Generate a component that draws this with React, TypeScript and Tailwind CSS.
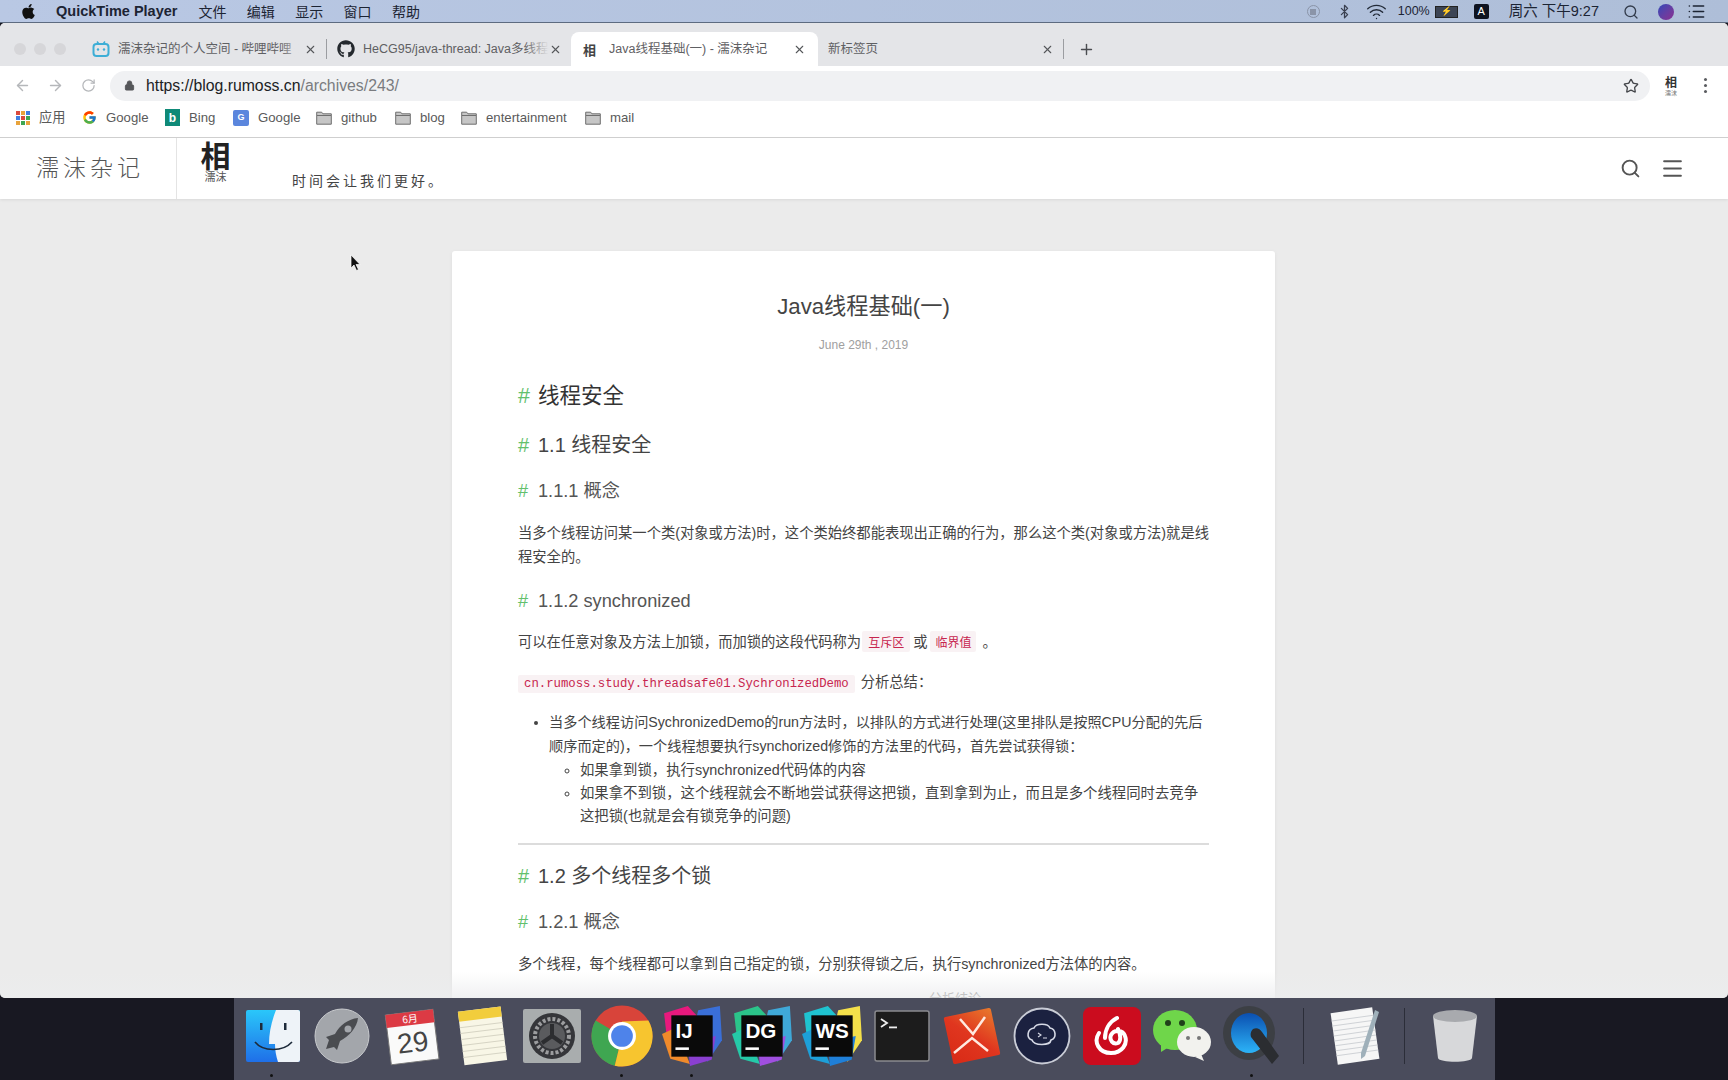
import React from "react";
import { ArrowLeft, ArrowRight, RotateCw, Lock, Star, Search, Menu, X, Plus, Wifi, Bluetooth, List } from "lucide-react";
import { FaApple, FaGithub } from "react-icons/fa";
import { FcGoogle } from "react-icons/fc";

const sans = "font-['Liberation_Sans','Noto_Sans_CJK_SC',sans-serif]";

function Hd({ size, lh, mt, color, children }: { size: string; lh: string; mt: string; color: string; children: React.ReactNode }) {
  return (
    <div className={`${size} ${lh} ${mt} ${color} flex`}>
      <span className="w-[20px] text-[#62c06c] font-normal">#</span>
      <span>{children}</span>
    </div>
  );
}

function Folder() {
  return (
    <svg width="16" height="14" viewBox="0 0 16 14" className="shrink-0">
      <path d="M0.7 1.2h5l1.2 1.6h8.4v10.4H0.7z" fill="#c6c6c6" stroke="#6f6f6f" strokeWidth="1" />
      <path d="M1 4.5h14" stroke="#6f6f6f" strokeWidth="1" />
    </svg>
  );
}

function Bookmark({ icon, label, w }: { icon: React.ReactNode; label: string; w: string }) {
  return (
    <div className={`flex items-center gap-[9px] ${w}`}>
      {icon}
      <span className="text-[13.200px] text-[#5a5a5a]">{label}</span>
    </div>
  );
}

function Tab({ icon, title, w, active, fade }: { icon: React.ReactNode; title: string; w: string; active?: boolean; fade?: boolean }) {
  return (
    <div className={`${w} h-[34px] flex items-center shrink-0 ${active ? "bg-white rounded-t-[8px] pl-[12px] pr-[12px]" : "pl-[10px] pr-[9px]"}`}>
      {icon}
      <span className="flex-1 overflow-hidden whitespace-nowrap text-[12.500px] text-[#5f6063] relative">
        {title}
        {fade && <span className="absolute right-0 top-0 bottom-0 w-[24px] bg-gradient-to-r from-transparent to-[#e4e5e8]" />}
      </span>
      <X size={13} strokeWidth={2} className="text-[#55575a] shrink-0" />
    </div>
  );
}

const jb = (a: string, b: string, c: string, d: string, label: string) => (
  <svg width="62" height="62" viewBox="0 0 60 60">
    <polygon points="3,8 26,1 38,14 20,36 5,26" fill={a} />
    <polygon points="36,5 57,1 59,34 45,55 30,30" fill={b} />
    <polygon points="1,28 14,22 28,57 9,52" fill={c} />
    <polygon points="26,36 53,30 49,53 28,59" fill={d} />
    <rect x="10" y="10" width="40" height="40" fill="#0a0a0a" />
    <text x="14" y="32" fontSize="20" fontWeight="700" fill="#fff" fontFamily="Liberation Sans, sans-serif">{label}</text>
    <rect x="14" y="41" width="13" height="2.500" fill="#fff" />
  </svg>
);

const dockItems: { k: string; dot?: boolean; el: React.ReactNode }[] = [
  { k: "finder", dot: true, el: (
    <svg width="60" height="60" viewBox="0 0 60 60">
      <defs><linearGradient id="fb" x1="0" y1="0" x2="0" y2="1"><stop offset="0" stopColor="#2ac7fa" /><stop offset="1" stopColor="#1f6fe8" /></linearGradient></defs>
      <rect x="4" y="4" width="54" height="52" rx="2" fill="url(#fb)" />
      <path d="M34 4h22a2 2 0 0 1 2 2v48a2 2 0 0 1-2 2H36c-2-6-3-12-3-18h-6c0-12 3-24 7-34z" fill="#eef3f8" />
      <rect x="18" y="17" width="2.500" height="7" fill="#1d2a3a" /><rect x="42" y="17" width="2.500" height="7" fill="#1d2a3a" />
      <path d="M13 36c8 10 28 10 37 0" stroke="#1d2a3a" strokeWidth="1.600" fill="none" />
    </svg>) },
  { k: "launchpad", el: (
    <svg width="60" height="60" viewBox="0 0 60 60">
      <circle cx="30" cy="30" r="27" fill="#a3a6ab" stroke="#c8cacd" strokeWidth="1" />
      <path d="M46 12c-10 1-18 7-23 16l-9 3 3 3-3 9 8-2 3 3 3-9c9-5 17-13 18-23z" fill="#4a4c50" />
      <circle cx="36" cy="23" r="3.500" fill="#a3a6ab" />
    </svg>) },
  { k: "cal", el: (
    <svg width="60" height="60" viewBox="0 0 60 60">
      <g transform="rotate(-7 30 30)">
        <rect x="6" y="6" width="48" height="50" fill="#fafafa" stroke="#777" strokeWidth="1" />
        <rect x="6" y="6" width="48" height="13" fill="#dc3a44" />
        <text x="30" y="16.500" textAnchor="middle" fontSize="10" fill="#fff" fontFamily="Noto Sans CJK SC, sans-serif">6月</text>
        <text x="30" y="46" textAnchor="middle" fontSize="28" fill="#444" fontFamily="Liberation Sans, sans-serif">29</text>
      </g>
    </svg>) },
  { k: "notes", el: (
    <svg width="60" height="60" viewBox="0 0 60 60">
      <g transform="rotate(-7 30 30)">
        <rect x="9" y="3" width="43" height="54" fill="#f8f6e6" />
        <rect x="9" y="3" width="43" height="10" fill="#f2cd3c" />
        {[19, 25, 31, 37, 43, 49].map((y) => <line key={y} x1="9" x2="52" y1={y} y2={y} stroke="#d6d4c4" strokeWidth="1" />)}
      </g>
    </svg>) },
  { k: "prefs", el: (
    <svg width="60" height="60" viewBox="0 0 60 60">
      <rect x="1" y="3" width="58" height="54" rx="2" fill="#a9adae" />
      <circle cx="30" cy="30" r="23" fill="#35363a" />
      <circle cx="30" cy="30" r="17" fill="none" stroke="#9c9d9f" strokeWidth="4" strokeDasharray="3 2" />
      <circle cx="30" cy="30" r="13" fill="#5a5b5e" />
      <path d="M30 30V18M30 30l10 7M30 30l-10 7" stroke="#2c2d30" strokeWidth="4" />
    </svg>) },
  { k: "chrome", dot: true, el: (
    <svg width="62" height="62" viewBox="0 0 60 60">
      <circle cx="30" cy="30" r="29.500" fill="#d8443a" />
      <path d="M4.500 15A29.500 29.500 0 0 0 23 58.700L30 30z" fill="#3fa651" />
      <path d="M55.500 15A29.500 29.500 0 0 1 23 58.700L30 30 30 16z" fill="#f7c52f" />
      <circle cx="30" cy="30" r="13.500" fill="#fff" />
      <circle cx="30" cy="30" r="10.500" fill="#4e83ea" />
    </svg>) },
  { k: "ij", dot: true, el: jb("#e8197d", "#3a6fd8", "#f08a2a", "#8a3fd0", "IJ") },
  { k: "dg", el: jb("#2bc48a", "#3fa8d8", "#25c9a8", "#a04fe0", "DG") },
  { k: "ws", el: jb("#1fc3d0", "#f4e04a", "#1d9fd8", "#1f7fd8", "WS") },
  { k: "term", el: (
    <svg width="60" height="60" viewBox="0 0 60 60">
      <rect x="3" y="5" width="54" height="50" rx="2" fill="#1c1c1c" stroke="#8a8a8e" strokeWidth="1.500" />
      <path d="M9 13l6 4-6 4" stroke="#eee" strokeWidth="1.800" fill="none" />
      <rect x="17" y="20.500" width="8" height="1.800" fill="#eee" />
    </svg>) },
  { k: "xmind", el: (
    <svg width="60" height="60" viewBox="0 0 60 60">
      <defs><linearGradient id="xm" x1="1" y1="0" x2="0" y2="1"><stop offset="0" stopColor="#e87a2c" /><stop offset="0.5" stopColor="#e0361f" /><stop offset="1" stopColor="#d82a16" /></linearGradient></defs>
      <g transform="rotate(-12 30 30)"><rect x="6" y="6" width="48" height="48" rx="2" fill="url(#xm)" /></g>
      <path d="M18 13l13 15 12-17M12 47l18-15 16 13" stroke="#ffe9e0" strokeWidth="2.500" fill="none" />
    </svg>) },
  { k: "cloud", el: (
    <svg width="60" height="60" viewBox="0 0 60 60">
      <circle cx="30" cy="30" r="27.500" fill="#1b2140" stroke="#c9ccd6" strokeWidth="1.800" />
      <path d="M22 22c2-5 14-5 16 0 6 1 7 10 1 12-1 6-17 6-19 0-6-2-5-11 2-12z" fill="none" stroke="#d7dae6" strokeWidth="1.600" />
      <path d="M26 27l3 2-3 2M31 32h4" stroke="#d7dae6" strokeWidth="1.100" fill="none" />
    </svg>) },
  { k: "netease", el: (
    <svg width="60" height="60" viewBox="0 0 60 60">
      <rect x="1" y="1" width="58" height="58" rx="8" fill="#cb0c1e" />
      <path d="M35 12c-8 4-12 12-12 20M17 27c-6 9 0 20 12 20 11 0 17-9 14-17-2-6-11-7-14-1-2 5 2 10 7 8 3-2 3-8 0-14" stroke="#fff" strokeWidth="4" fill="none" strokeLinecap="round" />
    </svg>) },
  { k: "wechat", el: (
    <svg width="62" height="60" viewBox="0 0 62 60">
      <ellipse cx="24" cy="24" rx="22" ry="20" fill="#6fd64a" />
      <path d="M10 38l0 8 8-5z" fill="#6fd64a" />
      <circle cx="17" cy="17" r="3" fill="#20401a" /><circle cx="31" cy="17" r="3" fill="#20401a" />
      <ellipse cx="43" cy="36" rx="17" ry="15" fill="#f2f2ee" />
      <path d="M50 48l3 7-9-4z" fill="#f2f2ee" />
      <circle cx="37" cy="32" r="2" fill="#777" /><circle cx="48" cy="32" r="2" fill="#777" />
    </svg>) },
  { k: "qt", dot: true, el: (
    <svg width="60" height="62" viewBox="0 0 60 62">
      <defs><linearGradient id="qb" x1="0" y1="0" x2="0" y2="1"><stop offset="0" stopColor="#0b4fb0" /><stop offset="1" stopColor="#2cb4f8" /></linearGradient></defs>
      <ellipse cx="27" cy="28" rx="26" ry="27" fill="#3c3f44" />
      <ellipse cx="27" cy="28" rx="18" ry="20" fill="url(#qb)" />
      <path d="M31 24c4-2 7 0 9 3l17 24-7 8-21-27c-1-3 0-6 2-8z" fill="#2b2d31" />
    </svg>) },
];

function Slot({ children, dot }: { children: React.ReactNode; dot?: boolean }) {
  return (
    <div className="w-[70px] flex flex-col items-center pt-[8px] shrink-0">
      <div className="h-[60px] flex items-center justify-center">{children}</div>
      <div className={`w-[3px] h-[3px] rounded-full mt-[8px] ${dot ? "bg-[#111]" : ""}`} />
    </div>
  );
}

function Dock() {
  return (
    <div className="h-[82px] bg-[#181822] flex justify-center shrink-0">
      <div className="flex items-start bg-[#4a4c5c] w-[1261px] pl-[3px]">
        {dockItems.map((d) => <Slot key={d.k} dot={d.dot}>{d.el}</Slot>)}
        <div className="w-[33px] flex justify-center pt-[10px]"><div className="w-px h-[56px] bg-[#2b2d38]" /></div>
        <Slot>
          <svg width="60" height="60" viewBox="0 0 60 60">
            <g transform="rotate(-8 30 30)">
              <rect x="9" y="4" width="42" height="52" fill="#f6f6f6" />
              {[12, 17, 22, 27, 32, 37, 42, 47].map((y) => <line key={y} x1="9" x2="51" y1={y} y2={y} stroke="#cfd2d6" strokeWidth="1" />)}
            </g>
            <path d="M50 4l4 2-14 44-4 3 0-6z" fill="#9fb0ba" />
          </svg>
        </Slot>
        <div className="w-[30px] flex justify-center pt-[10px]"><div className="w-px h-[56px] bg-[#2b2d38]" /></div>
        <Slot>
          <svg width="60" height="60" viewBox="0 0 60 60">
            <path d="M8 10l5 42c1 5 33 5 34 0l5-42z" fill="#d7d8da" />
            <ellipse cx="30" cy="10" rx="22" ry="6" fill="#a8aaae" />
          </svg>
        </Slot>
      </div>
    </div>
  );
}

export default function App() {
  return (
    <div className={`w-[1728px] h-[1080px] overflow-hidden flex flex-col bg-[#181822] ${sans}`}>
      {/* macOS menu bar */}
      <div className="h-[23px] shrink-0 flex items-center pl-[20px] pr-[22px] pt-[1px] bg-gradient-to-r from-[#b9c8e4] to-[#aebed8] border-b border-[#5d6b80] text-[#1c2433] text-[14px]">
        <FaApple size={17} className="text-[#111] mr-[19px]" />
        <span className="font-bold mr-[21px] text-[14.500px]">QuickTime Player</span>
        <div className="flex gap-[20.400px] text-[14px] font-['Noto_Sans_CJK_SC',sans-serif]">
          <span>文件</span><span>编辑</span><span>显示</span><span>窗口</span><span>帮助</span>
        </div>
        <div className="flex-1" />
        <div className="w-[13px] h-[13px] rounded-full border border-[#8a94a8] flex items-center justify-center mr-[17px]"><div className="w-[6px] h-[6px] bg-[#8a94a8]" /></div>
        <Bluetooth size={15} className="text-[#3a4050] mr-[14px]" />
        <Wifi size={21} strokeWidth={1.600} className="text-[#222a38] mr-[11px]" />
        <span className="text-[12.500px] mr-[5px]">100%</span>
        <div className="w-[23px] h-[12px] border border-[#222] bg-[#3c4454] mr-[16px] flex items-center justify-center text-[9px] text-white leading-none">⚡</div>
        <div className="w-[15px] h-[15px] bg-[#0f1420] text-white rounded-[2px] text-[11px] flex items-center justify-center mr-[20px]">A</div>
        <span className="text-[14.500px] mr-[24px]">周六 下午9:27</span>
        <Search size={16} className="text-[#333c4c] mr-[19px]" />
        <div className="w-[16px] h-[16px] rounded-full bg-gradient-to-br from-[#2c46b8] to-[#8a2c90] mr-[13px]" />
        <List size={19} className="text-[#1c2433]" />
      </div>

      {/* Browser window */}
      <div className="h-[975px] shrink-0 flex flex-col overflow-hidden rounded-[5px] bg-[#ebebeb] relative">
        <div className="h-[43px] shrink-0 bg-[#e4e5e8] flex items-end pl-[14px]">
          <div className="flex gap-[8px] mb-[11px] mr-[16px]">
            <span className="w-[12px] h-[12px] rounded-full bg-[#d6d6d9]" />
            <span className="w-[12px] h-[12px] rounded-full bg-[#d6d6d9]" />
            <span className="w-[12px] h-[12px] rounded-full bg-[#d6d6d9]" />
          </div>
          <Tab
            w="w-[244px]"
            fade
            title="濡沫杂记的个人空间 - 哔哩哔哩"
            icon={<svg width="18" height="18" viewBox="0 0 18 18" className="mr-[8px] shrink-0"><rect x="1.500" y="4" width="15" height="12" rx="3" fill="none" stroke="#3eaed6" strokeWidth="2" /><path d="M5 1.500l2 2.500M13 1.500l-2 2.500" stroke="#3eaed6" strokeWidth="1.500" /><circle cx="6" cy="9.500" r="1.200" fill="#3eaed6" /><circle cx="12" cy="9.500" r="1.200" fill="#3eaed6" /></svg>}
          />
          <div className="w-px h-[20px] bg-[#9b9da1] mb-[7px]" />
          <Tab
            w="w-[244px]"
            fade
            title="HeCG95/java-thread: Java多线程"
            icon={<FaGithub size={18} className="text-[#24292e] mr-[8px] shrink-0" />}
          />
          <Tab
            w="w-[247px]"
            active
            title="Java线程基础(一) - 濡沫杂记"
            icon={<span className="w-[26px] shrink-0 text-[13px] font-bold text-[#444] leading-none font-['Noto_Sans_CJK_SC',sans-serif]">相</span>}
          />
          <Tab w="w-[245px]" title="新标签页" icon={null} />
          <div className="w-px h-[20px] bg-[#9b9da1] mb-[7px]" />
          <Plus size={17} strokeWidth={2} className="text-[#4a4c50] ml-[14px] mb-[8px]" />
        </div>

        <div className="h-[35px] shrink-0 bg-white flex items-center pl-[14px] pt-[4px]">
          <ArrowLeft size={17} className="text-[#b5b7ba]" />
          <ArrowRight size={17} className="text-[#b5b7ba] ml-[16px]" />
          <RotateCw size={15} className="text-[#b5b7ba] ml-[17px]" />
          <div className="w-[1540px] h-[30px] ml-[14px] rounded-full bg-[#f0f1f3] flex items-center pl-[14px] pr-[11px]">
            <Lock size={11} fill="#55575a" className="text-[#55575a] mr-[11px]" />
            <span className="text-[15.800px] text-[#202124]">https://blog.rumoss.cn<span className="text-[#7a7c80]">/archives/243/</span></span>
            <div className="flex-1" />
            <Star size={16} className="text-[#45474b]" />
          </div>
          <div className="ml-[1px] w-[40px] flex flex-col items-center font-['Noto_Sans_CJK_SC',sans-serif] text-[#333]">
            <span className="text-[12px] leading-[14px] font-bold">相</span>
            <span className="text-[6px] leading-[8px] text-[#777]">濡沫</span>
          </div>
          <div className="flex flex-col gap-[3px] ml-[13px]">
            <span className="w-[3px] h-[3px] rounded-full bg-[#5a5c60]" />
            <span className="w-[3px] h-[3px] rounded-full bg-[#5a5c60]" />
            <span className="w-[3px] h-[3px] rounded-full bg-[#5a5c60]" />
          </div>
        </div>

        <div className="h-[37px] shrink-0 bg-white flex items-center pl-[16px] pb-[2px] border-b border-[#cfcfcf]">
          <Bookmark w="w-[66px]" label="应用" icon={
            <div className="grid grid-cols-3 gap-[1.500px] w-[14px]">
              {["#d94a3d", "#e8a33c", "#3f7fe0", "#3f7fe0", "#d94a3d", "#3fa651", "#e8a33c", "#3fa651", "#e8a33c"].map((c, i) => <span key={i} className="w-[3.500px] h-[3.500px]" style={{ background: c }} />)}
            </div>} />
          <Bookmark w="w-[83px]" label="Google" icon={<FcGoogle size={15} />} />
          <Bookmark w="w-[68px]" label="Bing" icon={<div className="w-[15px] h-[17px] bg-[#0f8a78] text-white text-[12px] font-bold flex items-center justify-center leading-none">b</div>} />
          <Bookmark w="w-[83px]" label="Google" icon={<div className="w-[16px] h-[16px] rounded-[2px] bg-[#5b86dd] text-white text-[9px] font-bold flex items-center justify-center leading-none">G</div>} />
          <Bookmark w="w-[79px]" label="github" icon={<Folder />} />
          <Bookmark w="w-[66px]" label="blog" icon={<Folder />} />
          <Bookmark w="w-[124px]" label="entertainment" icon={<Folder />} />
          <Bookmark w="w-[60px]" label="mail" icon={<Folder />} />
        </div>

        {/* Page */}
        <div className="flex-1 overflow-hidden flex flex-col relative">
          <div className="h-[61px] shrink-0 bg-white flex items-stretch shadow-[0_1px_3px_rgba(0,0,0,0.08)] relative z-10">
            <div className="w-[177px] border-r border-[#e4e4e4] pl-[36px] pb-[4px] flex items-center text-[23px] tracking-[4px] text-[#555] font-['Noto_Sans_CJK_SC',sans-serif] font-light">濡沫杂记</div>
            <div className="pl-[22px] flex flex-col items-center w-[55px] font-['Noto_Sans_CJK_SC',sans-serif]">
              <span className="text-[30px] leading-[32px] font-bold text-[#222]">相</span>
              <span className="text-[11px] leading-[13px] text-[#555]">濡沫</span>
            </div>
            <div className="ml-[60px] self-end pb-[8px] text-[14px] tracking-[3px] text-[#444] font-['Noto_Sans_CJK_SC',sans-serif]">时间会让我们更好。</div>
            <div className="flex-1" />
            <div className="flex items-center pr-[43px]">
              <Search size={21} strokeWidth={2.200} className="text-[#555]" />
              <Menu size={25} strokeWidth={2} className="text-[#555] ml-[19px]" />
            </div>
          </div>

          <div className="flex-1 overflow-hidden flex justify-center pt-[52px] pr-[1px]">
            <div className="w-[823px] h-[1000px] shrink-0 bg-white rounded-[3px] shadow-[0_1px_4px_rgba(0,0,0,0.06)] px-[66px] pt-[41px] text-[#444]">
              <div className="text-center text-[22.200px] leading-[30px] text-[#444]">Java线程基础(一)</div>
              <div className="text-center text-[12px] leading-[18px] mt-[14px] text-[#a0a0a0]">June 29th , 2019</div>
              <Hd size="text-[21.500px]" lh="leading-[30px]" mt="mt-[27px]" color="text-[#333]">线程安全</Hd>
              <Hd size="text-[20px]" lh="leading-[28px]" mt="mt-[20px]" color="text-[#444]">1.1 线程安全</Hd>
              <Hd size="text-[18.200px]" lh="leading-[26px]" mt="mt-[19px]" color="text-[#555]">1.1.1 概念</Hd>
              <p className="text-[14.300px] leading-[24px] mt-[17px] text-[#444]">当多个线程访问某一个类(对象或方法)时，这个类始终都能表现出正确的行为，那么这个类(对象或方法)就是线程安全的。</p>
              <Hd size="text-[18.200px]" lh="leading-[26px]" mt="mt-[19px]" color="text-[#555]">1.1.2 synchronized</Hd>
              <p className="text-[14.300px] leading-[24px] mt-[16px]">
                可以在任意对象及方法上加锁，而加锁的这段代码称为<code className="ml-[1px] mr-[3px] bg-[#f9f2f4] text-[#c7254e] text-[12px] px-[6px] py-[2px] rounded-[2px] font-['Noto_Sans_CJK_SC',sans-serif]">互斥区</code>或<code className="ml-[3px] mr-[2px] bg-[#f9f2f4] text-[#c7254e] text-[12px] px-[5px] py-[2px] rounded-[2px] font-['Noto_Sans_CJK_SC',sans-serif]">临界值</code> 。
              </p>
              <p className="text-[14.300px] leading-[24px] mt-[16px]">
                <code className="bg-[#f9f2f4] text-[#c7254e] text-[12.300px] px-[6px] py-[2px] rounded-[2px] font-['Liberation_Mono',monospace]">cn.rumoss.study.threadsafe01.SychronizedDemo</code><span className="ml-[6px]">分析总结：</span>
              </p>
              <ul className="list-disc pl-[31px] mt-[14px] text-[14.200px]">
                <li className="leading-[24px]">
                  当多个线程访问SychronizedDemo的run方法时，以排队的方式进行处理(这里排队是按照CPU分配的先后顺序而定的)，一个线程想要执行synchorized修饰的方法里的代码，首先尝试获得锁：
                  <ul className="list-[circle] pl-[31px] pt-[1px] leading-[22.800px] text-[14.380px]">
                    <li>如果拿到锁，执行synchronized代码体的内容</li>
                    <li>如果拿不到锁，这个线程就会不断地尝试获得这把锁，直到拿到为止，而且是多个线程同时去竞争这把锁(也就是会有锁竞争的问题)</li>
                  </ul>
                </li>
              </ul>
              <hr className="mt-[16px] border-t-2 border-[#dcdcdc]" />
              <Hd size="text-[20px]" lh="leading-[28px]" mt="mt-[17px]" color="text-[#444]">1.2 多个线程多个锁</Hd>
              <Hd size="text-[18.200px]" lh="leading-[26px]" mt="mt-[19px]" color="text-[#555]">1.2.1 概念</Hd>
              <p className="text-[14.300px] leading-[24px] mt-[17px]">多个线程，每个线程都可以拿到自己指定的锁，分别获得锁之后，执行synchronized方法体的内容。</p>
              <div className="flex items-center mt-[13px] text-[13px] text-[#666]">
                <div className="w-[397px] border-t border-[#ddd]" />
                <span className="ml-[14px]">分析结论</span>
              </div>
            </div>
          </div>

          {/* Dock shadow fade + mouse cursor overlays */}
          <div className="absolute left-0 right-0 bottom-0 h-[26px] bg-gradient-to-b from-transparent to-[#ecedee]/80 pointer-events-none z-20" />
          <svg width="12" height="18" viewBox="0 0 12 18" className="absolute left-[350px] top-[116px] z-30">
            <path d="M1 1v13l3-3 2.500 5.500 2-1-2.500-5H10z" fill="#111" stroke="#fff" strokeWidth="0.700" />
          </svg>
        </div>
      </div>

      <Dock />
    </div>
  );
}
